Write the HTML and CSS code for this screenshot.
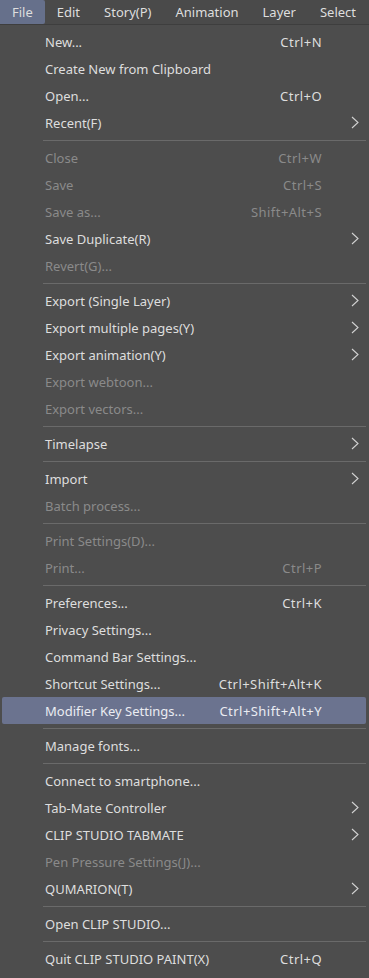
FILE: index.html
```html
<!DOCTYPE html>
<html lang="en">

<head>
    <meta charset="UTF-8">
    <meta name="viewport" content="width=device-width, initial-scale=1.0">
    <title>File Menu</title>
    <link rel="stylesheet" href="styles.css">
</head>

<body>

    <!-- Menu Bar -->
    <div class="menubar">
        <div class="bar-item active">File</div>
        <div class="bar-item">Edit</div>
        <div class="bar-item">Story(P)</div>
        <div class="bar-item">Animation</div>
        <div class="bar-item">Layer</div>
        <div class="bar-item">Select</div>
    </div>

    <!-- File Menu -->
    <div class="menu">
        <div class="item"><span class="label">New...</span><span class="key">Ctrl+N</span><span class="sub"></span></div>
        <div class="item"><span class="label">Create New from Clipboard</span><span class="key"></span><span class="sub"></span></div>
        <div class="item"><span class="label">Open...</span><span class="key">Ctrl+O</span><span class="sub"></span></div>
        <div class="item"><span class="label">Recent(F)</span><span class="key"></span><span class="sub"><svg width="8" height="13" viewBox="0 0 8 13"><polyline points="1,1 7,6.5 1,12" /></svg></span></div>
        <div class="sep"></div>

        <div class="item off"><span class="label">Close</span><span class="key">Ctrl+W</span><span class="sub"></span></div>
        <div class="item off"><span class="label">Save</span><span class="key">Ctrl+S</span><span class="sub"></span></div>
        <div class="item off"><span class="label">Save as...</span><span class="key">Shift+Alt+S</span><span class="sub"></span></div>
        <div class="item"><span class="label">Save Duplicate(R)</span><span class="key"></span><span class="sub"><svg width="8" height="13" viewBox="0 0 8 13"><polyline points="1,1 7,6.5 1,12" /></svg></span></div>
        <div class="item off"><span class="label">Revert(G)...</span><span class="key"></span><span class="sub"></span></div>
        <div class="sep"></div>

        <div class="item"><span class="label">Export (Single Layer)</span><span class="key"></span><span class="sub"><svg width="8" height="13" viewBox="0 0 8 13"><polyline points="1,1 7,6.5 1,12" /></svg></span></div>
        <div class="item"><span class="label">Export multiple pages(Y)</span><span class="key"></span><span class="sub"><svg width="8" height="13" viewBox="0 0 8 13"><polyline points="1,1 7,6.5 1,12" /></svg></span></div>
        <div class="item"><span class="label">Export animation(Y)</span><span class="key"></span><span class="sub"><svg width="8" height="13" viewBox="0 0 8 13"><polyline points="1,1 7,6.5 1,12" /></svg></span></div>
        <div class="item off"><span class="label">Export webtoon...</span><span class="key"></span><span class="sub"></span></div>
        <div class="item off"><span class="label">Export vectors...</span><span class="key"></span><span class="sub"></span></div>
        <div class="sep"></div>

        <div class="item"><span class="label">Timelapse</span><span class="key"></span><span class="sub"><svg width="8" height="13" viewBox="0 0 8 13"><polyline points="1,1 7,6.5 1,12" /></svg></span></div>
        <div class="sep"></div>

        <div class="item"><span class="label">Import</span><span class="key"></span><span class="sub"><svg width="8" height="13" viewBox="0 0 8 13"><polyline points="1,1 7,6.5 1,12" /></svg></span></div>
        <div class="item off"><span class="label">Batch process...</span><span class="key"></span><span class="sub"></span></div>
        <div class="sep"></div>

        <div class="item off"><span class="label">Print Settings(D)...</span><span class="key"></span><span class="sub"></span></div>
        <div class="item off"><span class="label">Print...</span><span class="key">Ctrl+P</span><span class="sub"></span></div>
        <div class="sep"></div>

        <div class="item"><span class="label">Preferences...</span><span class="key">Ctrl+K</span><span class="sub"></span></div>
        <div class="item"><span class="label">Privacy Settings...</span><span class="key"></span><span class="sub"></span></div>
        <div class="item"><span class="label">Command Bar Settings...</span><span class="key"></span><span class="sub"></span></div>
        <div class="item"><span class="label">Shortcut Settings...</span><span class="key">Ctrl+Shift+Alt+K</span><span class="sub"></span></div>
        <div class="item hover"><span class="label">Modifier Key Settings...</span><span class="key">Ctrl+Shift+Alt+Y</span><span class="sub"></span></div>
        <div class="sep"></div>

        <div class="item"><span class="label">Manage fonts...</span><span class="key"></span><span class="sub"></span></div>
        <div class="sep"></div>

        <div class="item"><span class="label">Connect to smartphone...</span><span class="key"></span><span class="sub"></span></div>
        <div class="item"><span class="label">Tab-Mate Controller</span><span class="key"></span><span class="sub"><svg width="8" height="13" viewBox="0 0 8 13"><polyline points="1,1 7,6.5 1,12" /></svg></span></div>
        <div class="item"><span class="label">CLIP STUDIO TABMATE</span><span class="key"></span><span class="sub"><svg width="8" height="13" viewBox="0 0 8 13"><polyline points="1,1 7,6.5 1,12" /></svg></span></div>
        <div class="item off"><span class="label">Pen Pressure Settings(J)...</span><span class="key"></span><span class="sub"></span></div>
        <div class="item"><span class="label">QUMARION(T)</span><span class="key"></span><span class="sub"><svg width="8" height="13" viewBox="0 0 8 13"><polyline points="1,1 7,6.5 1,12" /></svg></span></div>
        <div class="sep"></div>

        <div class="item"><span class="label">Open CLIP STUDIO...</span><span class="key"></span><span class="sub"></span></div>
        <div class="sep"></div>

        <div class="item"><span class="label">Quit CLIP STUDIO PAINT(X)</span><span class="key">Ctrl+Q</span><span class="sub"></span></div>
    </div>

</body>

</html>
```

FILE: styles.css
```css
body {
    margin: 0;
    padding: 0;
    background-color: #3b3b3b;
    font-family: "Noto Sans", "Open Sans", sans-serif;
    font-size: 13px;
    color: #dedede;
}

/* menu bar */
.menubar {
    display: flex;
    height: 24px;
    background-color: #4a4a4a;
    border-bottom: 1px solid #3e3e3e;
}

.bar-item {
    display: flex;
    align-items: center;
    padding: 0 12px 0 12px;
    line-height: 24px;
}

.bar-item.active {
    background-color: #66708b;
    border-radius: 0 2px 2px 0;
}

/* dropdown */
.menu {
    background-color: #4d4d4d;
    padding: 3px 3px 3px 2px;
    height: 947px;
}

.item {
    display: flex;
    align-items: center;
    height: 27px;
    padding-left: 43px;
    border-radius: 2px;
}

.item .label {
    flex: 1;
    white-space: nowrap;
}

.item .key {
    white-space: nowrap;
    text-align: right;
    letter-spacing: 0.45px;
    padding-right: 1px;
}

.item .sub {
    width: 43px;
    display: flex;
    justify-content: flex-end;
    padding-right: 7px;
    box-sizing: border-box;
}

.item .sub svg {
    fill: none;
    stroke: #d2d2d2;
    stroke-width: 1.1;
}

.item.off {
    color: #8a8a8a;
}

.item.hover {
    background-color: #6b738f;
    color: #eaecf2;
}

.sep {
    height: 8px;
    display: flex;
    align-items: center;
    padding-left: 41px;
}

.sep::after {
    content: "";
    flex: 1;
    height: 1px;
    background-color: #6a6a6a;
}
```
